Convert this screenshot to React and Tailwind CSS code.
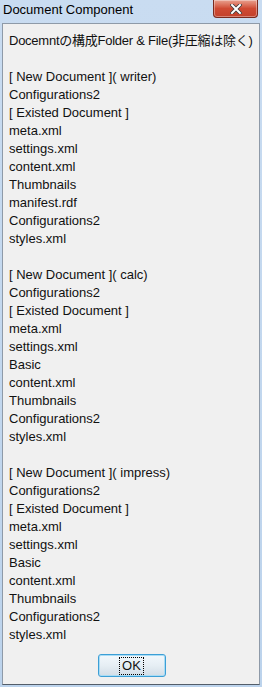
// Document Component dialog (Windows 7 style)

const lines = [
  'Docemntの構成Folder & File(非圧縮は除く)',
  '',
  '[ New Document ]( writer)',
  'Configurations2',
  '[ Existed Document ]',
  'meta.xml',
  'settings.xml',
  'content.xml',
  'Thumbnails',
  'manifest.rdf',
  'Configurations2',
  'styles.xml',
  '',
  '[ New Document ]( calc)',
  'Configurations2',
  '[ Existed Document ]',
  'meta.xml',
  'settings.xml',
  'Basic',
  'content.xml',
  'Thumbnails',
  'Configurations2',
  'styles.xml',
  '',
  '[ New Document ]( impress)',
  'Configurations2',
  '[ Existed Document ]',
  'meta.xml',
  'settings.xml',
  'Basic',
  'content.xml',
  'Thumbnails',
  'Configurations2',
  'styles.xml',
]

export default function App() {
  return (
    <div
      className="w-[262px] h-[687px] flex flex-col bg-gradient-to-b from-[#c9dcf1] to-[#bcd3ec] px-[2px] pb-[2px] text-[#111]"
      style={{ fontFamily: '"Liberation Sans", "Noto Sans CJK JP", sans-serif' }}
    >
      {/* title bar */}
      <div className="h-[23px] flex items-start justify-between">
        <span className="pl-[1px] pt-[2px] text-[13px] leading-[16px] text-black">Document Component</span>
        <button className="mr-[2px] w-[45px] h-[18px] rounded-b-[4px] border border-[#7a2a1e] border-t-0 bg-gradient-to-b from-[#e8a08f] via-[#cf4a33] to-[#c3412b] flex items-center justify-center shadow-[inset_0_0_0_1px_rgba(255,255,255,0.35)]">
          <svg width="12" height="10" viewBox="0 0 12 10">
            <path d="M2 1 L10 9 M10 1 L2 9" stroke="#3b3b3b" strokeWidth="3.6" strokeLinecap="square" />
            <path d="M2 1 L10 9 M10 1 L2 9" stroke="#ffffff" strokeWidth="2" strokeLinecap="square" />
          </svg>
        </button>
      </div>

      {/* body */}
      <div className="flex-1 flex flex-col bg-[#f0f0f0] border border-[#8e9aa8] border-b-[#535d69]">
        <div className="pl-[6px] pt-[8px] text-[13px] leading-[18px]">
          {lines.map((l, i) => (
            <div key={i} className={`h-[18px] whitespace-nowrap ${i === 0 ? 'tracking-[-0.25px]' : ''}`}>{l}</div>
          ))}
        </div>
        <div className="mt-[10px] flex justify-center pl-[1px]">
          <button className="w-[68px] h-[23px] rounded-[3px] border border-[#3c9fd6] bg-gradient-to-b from-[#f2f8fc] via-[#e6eef4] to-[#d2dde6] shadow-[inset_0_0_0_1px_#a9dcf5] flex items-center justify-center">
            <span className="px-[2px] leading-[16px] text-[13px] border border-dotted border-black">OK</span>
          </button>
        </div>
      </div>
    </div>
  )
}
